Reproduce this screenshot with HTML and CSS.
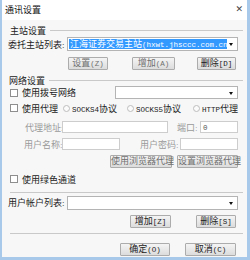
FILE: index.html
```html
<!DOCTYPE html>
<html lang="zh-CN">
<head>
    <meta charset="UTF-8">
    <title>通讯设置</title>
    <link rel="stylesheet" href="styles.css">
</head>
<body>
<div class="window">
    <div class="titlebar">
        <span class="title">通讯设置</span>
        <span class="close">&#x2715;</span>
    </div>
    <div class="content">
        <!--主站设置-->
        <div class="group g1"><span>主站设置</span><i></i></div>
        <div class="row r1">
            <span class="label lw">委托主站列表:</span>
            <div class="select s1"><span class="picked">江海证券交易主站<em class="lat">(hxwt.jhsccc.com.cn)</em></span><b></b></div>
        </div>
        <div class="row b1">
            <span class="btn dim w-set">设置<em class="lat">(Z)</em></span>
            <span class="btn dim w-add">增加<em class="lat">(A)</em></span>
            <span class="btn w-del">删除<em class="lat">[D]</em></span>
        </div>

        <!--网络设置-->
        <div class="group g2"><span>网络设置</span><i></i></div>
        <div class="row r2">
            <span class="check"></span><span class="label">使用拨号网络</span>
            <div class="select s2"><b></b></div>
        </div>
        <div class="row r3">
            <span class="check"></span><span class="label">使用代理</span>
            <span class="radio rd1"></span><span class="label"><em class="lat">SOCKS4</em>协议</span>
            <span class="radio rd2"></span><span class="label"><em class="lat">SOCKS5</em>协议</span>
            <span class="radio rd3"></span><span class="label"><em class="lat">HTTP</em>代理</span>
        </div>
        <div class="row r4">
            <span class="label off l-addr">代理地址:</span>
            <span class="input i-addr"></span>
            <span class="label off l-port">端口:</span>
            <span class="input i-port"><em class="lat">0</em></span>
        </div>
        <div class="row r5">
            <span class="label off l-user">用户名称:</span>
            <span class="input i-user"></span>
            <span class="label off l-pass">用户密码:</span>
            <span class="input i-pass"></span>
        </div>
        <div class="row b2">
            <span class="btn dim w-use">使用浏览器代理</span>
            <span class="btn dim w-cfg">设置浏览器代理</span>
        </div>
        <div class="row r6">
            <span class="check"></span><span class="label">使用绿色通道</span>
        </div>
        <div class="sep sep1"></div>

        <div class="row r7">
            <span class="label lw">用户帐户列表:</span>
            <div class="select s1"><b></b></div>
        </div>
        <div class="row b3">
            <span class="btn w-add2">增加<em class="lat">[Z]</em></span>
            <span class="btn w-del2">删除<em class="lat">[S]</em></span>
        </div>
        <div class="sep sep2"></div>
        <div class="row b4">
            <span class="btn w-ok">确定<em class="lat">(O)</em></span>
            <span class="btn w-cancel">取消<em class="lat">(C)</em></span>
        </div>
    </div>
</div>
</body>
</html>
```

FILE: styles.css
```css
* {
    padding: 0;
    margin: 0;
    box-sizing: border-box;
}

body {
    width: 250px;
    height: 260px;
    background: #fff;
    font-family: "Liberation Serif", "Noto Sans CJK SC", serif;
    font-size: 9px;
    color: #222;
}

/* latin text drawn narrow, like the old bitmap font */
em.lat {
    font-style: normal;
    font-family: "Liberation Mono", monospace;
    font-size: 7.5px;
}

.window {
    width: 250px;
    height: 260px;
    border: 2px solid #a9c9ea;
    border-top: 0;
    border-right-width: 3px;
    border-bottom-width: 3px;
    background: #f7f7f7;
    display: flex;
    flex-direction: column;
}

.titlebar {
    height: 20px;
    background: #fff;
    display: flex;
    align-items: center;
    justify-content: space-between;
    padding: 0 4px 2px 3px;
}

.title {
    font-size: 9px;
    color: #111;
}

.close {
    font-family: "DejaVu Sans", sans-serif;
    font-size: 9px;
    color: #444;
}

.content {
    display: flex;
    flex-direction: column;
    padding: 0 4px 0 6px;
}

.row {
    display: flex;
    align-items: center;
    white-space: nowrap;
}

.row > * {
    flex-shrink: 0;
}

/* group title with line */
.group {
    display: flex;
    align-items: center;
    height: 12px;
}

.group i {
    flex: 1;
    height: 1px;
    background: #c9c9c9;
    margin-left: 4px;
}

.g1 { margin-top: 4px; padding-left: 2px; }
.g2 { margin-top: 4px; padding-left: 1px; }

.lw {
    width: 59px;
}

.select {
    position: relative;
    height: 14px;
    background: #fff;
    border: 1px solid #b4b4b4;
    display: flex;
    align-items: center;
    padding-left: 1px;
}

.select b {
    position: absolute;
    right: 4px;
    top: 5px;
    border-left: 2px solid transparent;
    border-right: 2px solid transparent;
    border-top: 3px solid #111;
}

.s1 { width: 171px; }
.s2 { width: 123px; margin-left: auto; margin-right: 5px; height: 13px; }

.picked {
    background: #3399ff;
    color: #fff;
    height: 10px;
    line-height: 10px;
    width: 158px;
    padding-left: 1px;
}

.btn {
    height: 13px;
    line-height: 11px;
    text-align: center;
    border: 1px solid #acacac;
    border-radius: 1px;
    background: linear-gradient(#f4f4f4, #dcdcdc);
    color: #222;
}

.btn.dim { color: #6f6f6f; }

.r1 { margin-top: 1px; height: 14px; }

.b1 { margin-top: 6px; height: 13px; }
.w-set { width: 40px; margin-left: 60px; }
.w-add { width: 43px; margin-left: 24px; }
.w-del { width: 39px; margin-left: 22px; }

.r2 { height: 13px; }
.r3 { margin-top: 3px; height: 12px; }

.check {
    width: 8px;
    height: 8px;
    background: #fff;
    border: 1px solid #8e8e8e;
    margin: 0 4px 0 2px;
}

.radio {
    width: 7px;
    height: 7px;
    border-radius: 50%;
    border: 1px solid #bdbdbd;
    background: #fbfbfb;
    margin-right: 2px;
}

.rd1 { margin-left: 5px; }
.rd2 { margin-left: 10px; }
.rd3 { margin-left: 12px; }

.off { color: #9a9a9a; }

.input {
    height: 12px;
    background: #fff;
    border: 1px solid #cdcdcd;
    line-height: 10px;
    padding-left: 2px;
    color: #555;
}

.r4 { margin-top: 7px; height: 12px; }
.l-addr { width: 54px; padding-left: 17px; }
.i-addr { width: 106px; }
.l-port { width: 23px; margin-left: 9px; }
.i-port { width: 38px; }

.r5 { margin-top: 5px; height: 12px; }
.l-user { width: 54px; padding-left: 16px; }
.i-user { width: 58px; }
.l-pass { width: 40px; margin-left: 20px; }
.i-pass { width: 58px; }

.b2 { margin-top: 5px; height: 13px; }
.w-use { width: 62px; margin-left: 102px; }
.w-cfg { width: 61px; margin-left: 5px; }

.r6 { margin-top: 5px; height: 12px; }

.sep {
    height: 1px;
    background: #c9c9c9;
    margin-left: 2px;
}

.sep1 { margin-top: 7px; }

.r7 { margin-top: 3px; height: 13px; }

.b3 { margin-top: 6px; height: 13px; }
.w-add2 { width: 41px; margin-left: 122px; }
.w-del2 { width: 40px; margin-left: 25px; }

.sep2 { margin-top: 5px; }

.b4 { margin-top: 9px; height: 13px; }
.w-ok { width: 50px; margin-left: 112px; }
.w-cancel { width: 51px; margin-left: 15px; }
```
